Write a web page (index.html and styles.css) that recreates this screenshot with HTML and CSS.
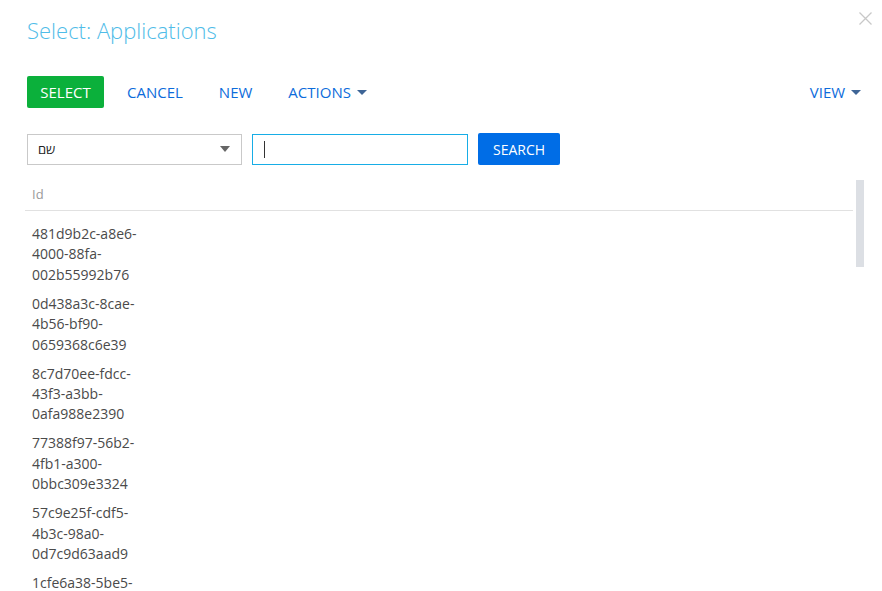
FILE: index.html
```html
<!DOCTYPE html>
<html lang="en">
<head>
    <meta charset="UTF-8">
    <title>Select: Applications</title>
    <link rel="stylesheet" href="styles.css">
</head>
<body>

    <div class="lookup-page">
        <!-- Header -->
        <div class="lookup-header">
            <div class="lookup-title">Select: Applications</div>
            <svg class="close-button" width="13" height="13" viewBox="0 0 13 13">
                <path d="M0.5 0.5 L12.5 12.5 M12.5 0.5 L0.5 12.5" stroke="#c8c8c8" stroke-width="1.3" fill="none"/>
            </svg>
        </div>

        <!-- Toolbar -->
        <div class="toolbar">
            <button class="btn-select">SELECT</button>
            <button class="btn-link">CANCEL</button>
            <button class="btn-link">NEW</button>
            <button class="btn-link">ACTIONS <span class="caret"></span></button>
            <button class="btn-link view-button">VIEW <span class="caret"></span></button>
        </div>

        <!-- Filter -->
        <div class="filter-row">
            <div class="column-select">
                <span dir="rtl">שם</span>
                <span class="select-caret"></span>
            </div>
            <div class="search-input"><span class="text-cursor"></span></div>
            <button class="btn-search">SEARCH</button>
        </div>

        <!-- Grid -->
        <div class="grid-wrap">
            <div class="grid">
                <div class="grid-header">Id</div>
                <div class="grid-body" id="grid-body"></div>
            </div>
            <div class="scrollbar"><div class="scroll-thumb"></div></div>
        </div>
    </div>

    <script>
        const ids = [
            '481d9b2c-a8e6-4000-88fa-002b55992b76',
            '0d438a3c-8cae-4b56-bf90-0659368c6e39',
            '8c7d70ee-fdcc-43f3-a3bb-0afa988e2390',
            '77388f97-56b2-4fb1-a300-0bbc309e3324',
            '57c9e25f-cdf5-4b3c-98a0-0d7c9d63aad9',
            '1cfe6a38-5be5-4c21-9d0e-0e4f1a7b2c61'
        ];
        const body = document.getElementById('grid-body');

        // one row per record
        ids.forEach(id => {
            const row = document.createElement('div');
            row.classList.add('grid-row');
            row.textContent = id;
            body.appendChild(row);
        });
    </script>

</body>
</html>
```

FILE: styles.css
```css
body {
    font-family: "Open Sans", Arial, sans-serif;
    margin: 0;
    padding: 0;
    background-color: #fff;
    overflow: hidden;
    height: 591px;
}

.lookup-page {
    padding: 0 18px 0 27px;
}

.lookup-header {
    display: flex;
    justify-content: space-between;
    align-items: flex-start;
    height: 76px;
}

.lookup-title {
    margin-top: 15px;
    font-size: 22px;
    font-weight: 300;
    color: #4fbce8;
}

.close-button {
    margin-top: 12px;
    margin-right: -8px;
}

.toolbar {
    display: flex;
    align-items: center;
    height: 32px;
}

.toolbar button {
    font-family: inherit;
    font-size: 15px;
    border: none;
    cursor: pointer;
    height: 32px;
}

.btn-select {
    background-color: #0bb03b;
    color: #fff;
    border-radius: 2px;
    width: 77px;
    padding: 0;
}

.btn-link {
    background-color: transparent;
    color: #0d6cdb;
    padding: 0;
    margin-left: 23px;
    margin-right: 13px;
}

.view-button {
    margin-left: auto;
    margin-right: 3px;
}

.caret {
    display: inline-block;
    width: 0;
    height: 0;
    border-left: 5px solid transparent;
    border-right: 5px solid transparent;
    border-top: 5px solid #3e6596;
    vertical-align: 3px;
    margin-left: 2px;
}

.filter-row {
    display: flex;
    align-items: center;
    margin-top: 25px;
    height: 32px;
}

.column-select {
    box-sizing: border-box;
    width: 215px;
    height: 31px;
    border: 1px solid #c9c9c9;
    display: flex;
    align-items: center;
    justify-content: space-between;
    padding: 0 11px 0 10px;
    font-size: 13px;
    color: #222;
}

.select-caret {
    width: 0;
    height: 0;
    border-left: 5px solid transparent;
    border-right: 5px solid transparent;
    border-top: 6px solid #666;
}

.search-input {
    box-sizing: border-box;
    width: 216px;
    height: 31px;
    margin-left: 10px;
    border: 1px solid #17ade6;
    display: flex;
    align-items: center;
    padding-left: 11px;
}

.text-cursor {
    width: 1px;
    height: 17px;
    background-color: #333;
}

.btn-search {
    height: 32px;
    width: 82px;
    margin-left: 10px;
    background-color: #006de6;
    color: #fff;
    border: none;
    border-radius: 2px;
    font-family: inherit;
    font-size: 14px;
    padding: 0;
}

.grid-wrap {
    display: flex;
    margin-top: 15px;
    margin-left: -2px;
}

.grid {
    flex: 1;
}

.grid-header {
    height: 30px;
    line-height: 26px;
    padding-left: 7px;
    font-size: 13px;
    color: #9a9a9a;
    border-bottom: 1px solid #e1e1e1;
    box-sizing: border-box;
    margin-top: 1px;
}

.grid-body {
    padding-top: 13px;
}

.grid-row {
    width: 115px;
    padding: 0 0 8.6px 7px;
    font-size: 14px;
    line-height: 20.4px;
    color: #4a4a4a;
}

.scrollbar {
    width: 8px;
    margin-left: 3px;
    margin-right: 0;
}

.scroll-thumb {
    height: 87px;
    background-color: #dcdfe4;
}
```
